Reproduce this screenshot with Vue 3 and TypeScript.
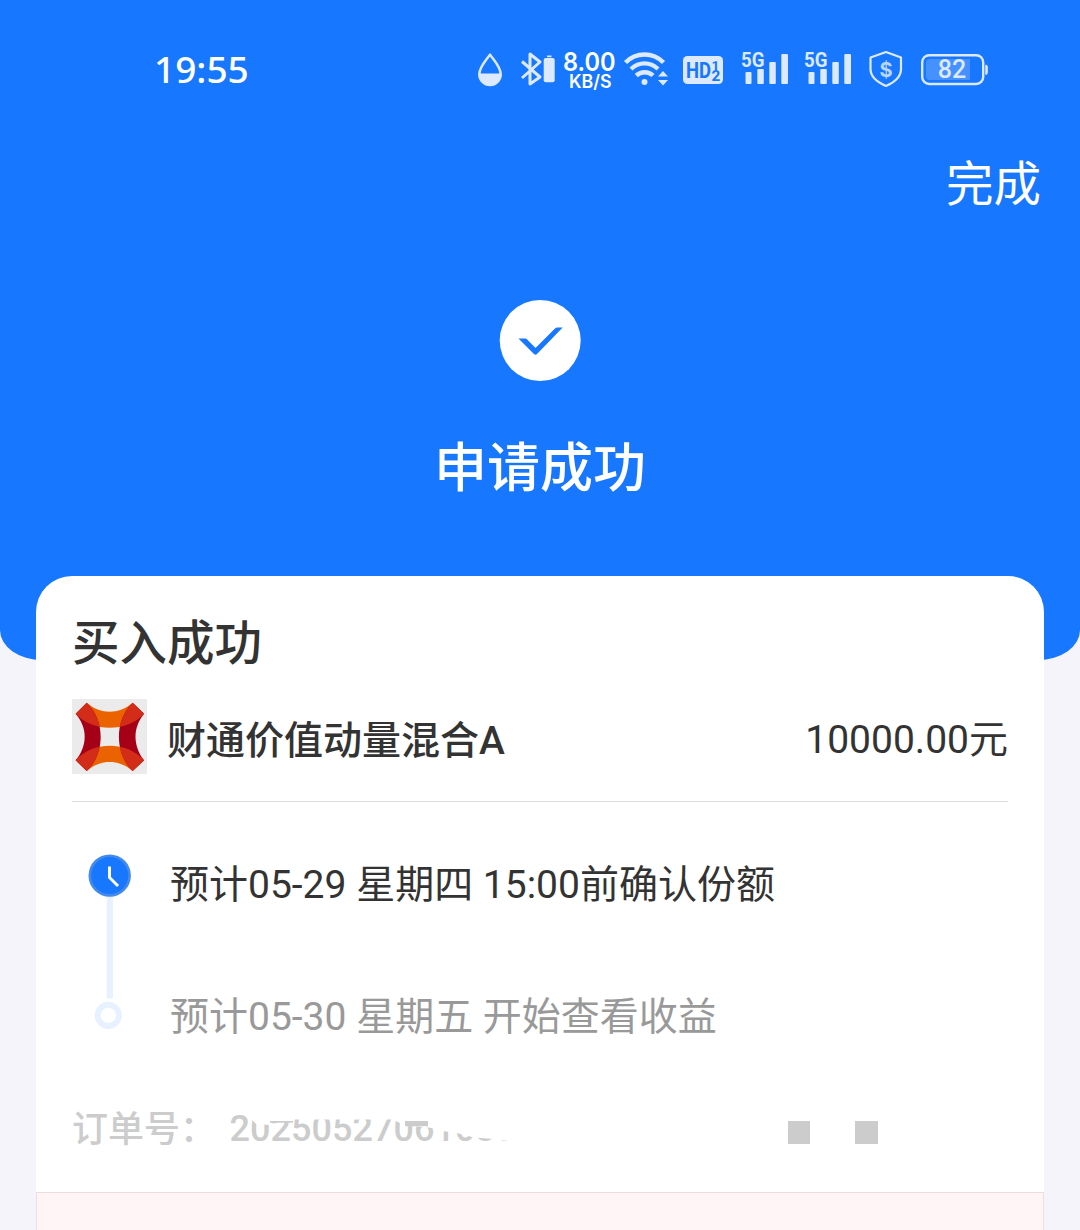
<script setup lang="ts">
interface Step {
  text: string
  active: boolean
}

const fund = { name: '财通价值动量混合A', amount: '10000.00元' }
const steps: Step[] = [
  { text: '预计05-29 星期四 15:00前确认份额', active: true },
  { text: '预计05-30 星期五 开始查看收益', active: false },
]
const signals: number[] = [1, 2]
</script>

<template>
  <div class="page">
    <header class="hero">
      <div class="status">
        <span class="clock">19:55</span>
        <div class="status-icons">
          <svg width="50" height="60" viewBox="465 40 50 60">
            <path d="M490 54.6C486 60.5 479.3 67 479.3 74.3a10.7 10.7 0 0 0 21.4 0C500.700 67 494 60.500 490 54.600Z" fill="none" stroke="#dce9ff" stroke-width="2.5" stroke-linejoin="round" />
            <path d="M479 73.500h22c0 7-5 11.500-11 11.500s-11-4.500-11-11.500Z" fill="#dce9ff" />
          </svg>
          <svg width="45" height="60" viewBox="515 40 45 60">
            <path d="M522 61.500 540 77 530 84V54l10 8-18 16" fill="none" stroke="#dce9ff" stroke-width="3" stroke-linejoin="round" />
            <rect x="543.700" y="58" width="11" height="24.300" rx="2" fill="#dce9ff" />
            <rect x="547" y="55.500" width="4.500" height="1.700" fill="#dce9ff" />
          </svg>
          <svg width="60" height="60" viewBox="560 40 60 60" class="speed">
            <text x="563" y="71" font-size="25.500" textLength="52.500" lengthAdjust="spacingAndGlyphs">8.00</text>
            <text x="569" y="87.500" font-size="18.500" textLength="42.500" lengthAdjust="spacingAndGlyphs">KB/S</text>
          </svg>
          <svg width="55" height="60" viewBox="620 40 55 60">
            <g fill="none" stroke="#dce9ff" stroke-width="4.400">
              <path d="M625.500 62.500C636 51.800 653 51.800 663.500 62.500" />
              <path d="M631 69C639 61.500 650 61.500 658 69" />
              <path d="M636.200 75.500C641 71.200 648.500 71.200 653 75.500" />
            </g>
            <circle cx="644.500" cy="82" r="3" fill="#dce9ff" />
            <path d="M663 71l5 5.500h-10ZM663 85.500l5-5.500h-10Z" fill="#dce9ff" />
          </svg>
          <svg width="60" height="60" viewBox="675 40 60 60" class="hd">
            <rect x="683" y="56" width="40" height="28" rx="4.500" fill="#dce9ff" />
            <text x="686" y="78" font-size="22.500" textLength="25" lengthAdjust="spacingAndGlyphs">HD</text>
            <text x="711.500" y="69.500" font-size="13.500">1</text>
            <text x="711.500" y="80.500" font-size="14" textLength="8.800" lengthAdjust="spacingAndGlyphs">2</text>
          </svg>
          <svg v-for="n in signals" :key="n" width="63" height="60" viewBox="735 40 63 60" class="signal">
            <rect x="745.500" y="72" width="6" height="12" rx="1" />
            <rect x="757.300" y="69" width="6.500" height="15" rx="1" />
            <rect x="769.300" y="62" width="6.500" height="22" rx="1" />
            <rect x="781.300" y="54" width="6.700" height="30" rx="1" />
            <text x="741" y="67.300" font-size="21" textLength="23.500" lengthAdjust="spacingAndGlyphs">5G</text>
          </svg>
          <svg width="50" height="60" viewBox="861 40 50 60" class="shield">
            <path d="M886 52 901 57.500V69c0 8-7 13.500-15 17-8-3.500-15.500-9-15.500-17V57.500Z" fill="none" stroke="#dce9ff" stroke-width="2.200" stroke-linejoin="round" />
            <text x="886" y="76.500" font-size="20" text-anchor="middle">$</text>
          </svg>
          <svg width="85" height="60" viewBox="911 40 85 60" class="battery">
            <rect x="922.200" y="55.200" width="61" height="28.800" rx="7" fill="none" stroke="#dce9ff" stroke-width="2.400" />
            <path d="M930 59h40v21h-40q-4 0-4-4V63q0-4 4-4Z" fill="#4491ff" />
            <path d="M985.800 65q1.500 0 1.500 2v5.500q0 2-1.500 2Z" fill="#dce9ff" stroke="#dce9ff" />
            <text x="952" y="78.300" font-size="25" text-anchor="middle">82</text>
          </svg>
        </div>
      </div>
      <div class="nav"><span>完成</span></div>
      <div class="result">
        <svg width="82" height="82" viewBox="499 300 82 82">
          <circle cx="540.200" cy="340.500" r="40.500" fill="#fff" />
          <path d="M518.500 338.500h6.800q1 0 1.600.7l8.600 8.900 19.500-19.700q1-.9 2.200-.9h5.500L537 354q-1.500 1.500-3 0Z" fill="#1777ff" />
        </svg>
        <h1>申请成功</h1>
      </div>
    </header>

    <main class="card">
      <h2>买入成功</h2>
      <div class="fund">
        <svg class="logo" width="75" height="75" viewBox="0 0 225 225">
          <defs>
            <clipPath id="bands">
              <path d="M44 11C86 47 140 47 182 11L216 44C165 100 62 100 11 44Z" />
              <path d="M44 216C86 180 140 180 182 216L216 184C165 126 62 126 11 184Z" />
            </clipPath>
          </defs>
          <rect width="225" height="225" fill="#ebebeb" />
          <g fill="#ea6300">
            <path d="M44 11C86 47 140 47 182 11L216 44C165 100 62 100 11 44Z" />
            <path d="M44 216C86 180 140 180 182 216L216 184C165 126 62 126 11 184Z" />
          </g>
          <g fill="#a50018">
            <path d="M44 11L11 44C47 86 47 140 11 184L44 216C100 165 100 62 44 11Z" />
            <path d="M182 11L216 44C182 86 182 140 216 184L182 216C127 165 127 62 182 11Z" />
          </g>
          <g fill="#d32d1a" clip-path="url(#bands)">
            <path d="M44 11L11 44C47 86 47 140 11 184L44 216C100 165 100 62 44 11Z" />
            <path d="M182 11L216 44C182 86 182 140 216 184L182 216C127 165 127 62 182 11Z" />
          </g>
        </svg>
        <span class="name">{{ fund.name }}</span>
        <span class="amount">{{ fund.amount }}</span>
      </div>

      <div class="timeline">
        <svg width="60" height="190" viewBox="72 850 60 190">
          <rect x="106.700" y="890" width="6.200" height="108.500" fill="#e7f1ff" />
          <circle cx="109.700" cy="875.600" r="21.200" fill="#4489ec" />
          <circle cx="109.700" cy="875.600" r="18.500" fill="#1777ff" />
          <path d="M109.500 866.500V877.500L118 886" fill="none" stroke="#fff" stroke-width="3" />
          <circle cx="108.300" cy="1015.300" r="10.600" fill="#fff" stroke="#e7f1ff" stroke-width="6" />
        </svg>
        <ul>
          <li v-for="step in steps" :key="step.text" :class="{ active: step.active }">{{ step.text }}</li>
        </ul>
      </div>

      <div class="order">
        <span class="label">订单号：</span>
        <svg width="300" height="50" viewBox="228 1100 300 50" class="number">
          <text x="229.500" y="1141" font-size="36" textLength="287">20250527061030</text>
          <path d="M250.500 1100V1118L256 1124 270 1125V1121H294V1119.500H393L404 1125 432 1128 443 1131 459 1133.500 474 1137.500 500 1139.500 512 1142V1150H528V1100Z" fill="#fff" />
          <path d="M270 1121h23v1.800h-23ZM405 1121h23v5.200h-23Z" fill="#ccc" />
        </svg>
        <i class="block"></i>
        <i class="block second"></i>
      </div>
      <div class="notice"></div>
    </main>
  </div>
</template>

<style>
body {
  margin: 0;
  background: #f4f4fa;
}
</style>

<style scoped>
.page {
  width: 1080px;
  height: 1230px;
  overflow: hidden;
  background: #f4f4fa;
  font-family: Roboto, "Noto Sans CJK SC", sans-serif;
}
.page svg {
  display: block;
  flex: none;
}
.hero {
  height: 660px;
  background: #1777ff;
  border-radius: 0 0 42px 42px / 0 0 30px 30px;
  color: #fff;
}
.status {
  display: flex;
  height: 100px;
  box-sizing: border-box;
  padding: 40px 84px 0 154px;
  justify-content: space-between;
}
.clock {
  font: 500 37px/58px "Noto Sans", sans-serif;
}
.status-icons {
  display: flex;
}
.speed text {
  font-family: Inter, sans-serif;
  font-weight: 600;
  fill: #fff;
}
.hd text {
  font-family: Roboto, sans-serif;
  font-weight: 700;
  fill: #1777ff;
}
.signal {
  fill: #dce9ff;
}
.signal text {
  font-family: Roboto, sans-serif;
  font-weight: 700;
  stroke: #1777ff;
  stroke-width: 1px;
  paint-order: stroke;
}
.shield text {
  font-family: Inter, sans-serif;
  font-weight: 700;
  fill: #b9d6ff;
}
.battery text {
  font-family: Roboto, sans-serif;
  font-weight: 500;
  fill: #dce9ff;
}
.nav {
  display: flex;
  justify-content: flex-end;
  padding: 50px 39px 0 0;
  font-size: 47.500px;
  line-height: 70px;
}
.result {
  display: flex;
  flex-direction: column;
  align-items: center;
  padding-top: 80px;
}
h1,
h2 {
  margin: 0;
  font-weight: 500;
}
h1 {
  margin-top: 47px;
  font-size: 53px;
  line-height: 80px;
}
.card {
  position: relative;
  display: flex;
  flex-direction: column;
  box-sizing: border-box;
  height: 654px;
  margin: -84px 36px 0;
  background: #fff;
  border-radius: 36px 36px 0 0;
  color: #333;
}
h2 {
  padding: 33px 36px 0;
  font-size: 47.500px;
  line-height: 70px;
}
.fund {
  display: flex;
  align-items: center;
  height: 75px;
  margin: 20px 36px 0;
  padding-bottom: 27px;
  border-bottom: 1px solid #ddd;
  font-size: 39px;
}
.name {
  margin-left: 20px;
  font-weight: 500;
}
.amount {
  margin-left: auto;
  padding-bottom: 2px;
}
.timeline {
  display: flex;
  height: 190px;
  margin: 48px 36px 0;
}
ul {
  margin: 0 0 0 38px;
  padding: 0;
  list-style: none;
  font-size: 39px;
  line-height: 70px;
  color: #999;
}
li {
  height: 132px;
  white-space: nowrap;
}
.active {
  color: #333;
}
.order {
  display: flex;
  height: 50px;
  margin: 60px 36px 42px;
  color: #ccc;
}
.label {
  width: 156px;
  font-size: 36px;
  font-weight: 500;
  line-height: 60px;
  white-space: nowrap;
}
.number text {
  fill: #ccc;
  font-weight: 500;
}
.block {
  width: 22px;
  height: 23px;
  margin: 21px 0 0 260px;
  background: #ccc;
}
.second {
  width: 23px;
  margin-left: 45px;
}
.notice {
  flex: 1;
  border: 1px solid #eedde0;
  border-bottom: 0;
  background: #fff5f6;
}
</style>
